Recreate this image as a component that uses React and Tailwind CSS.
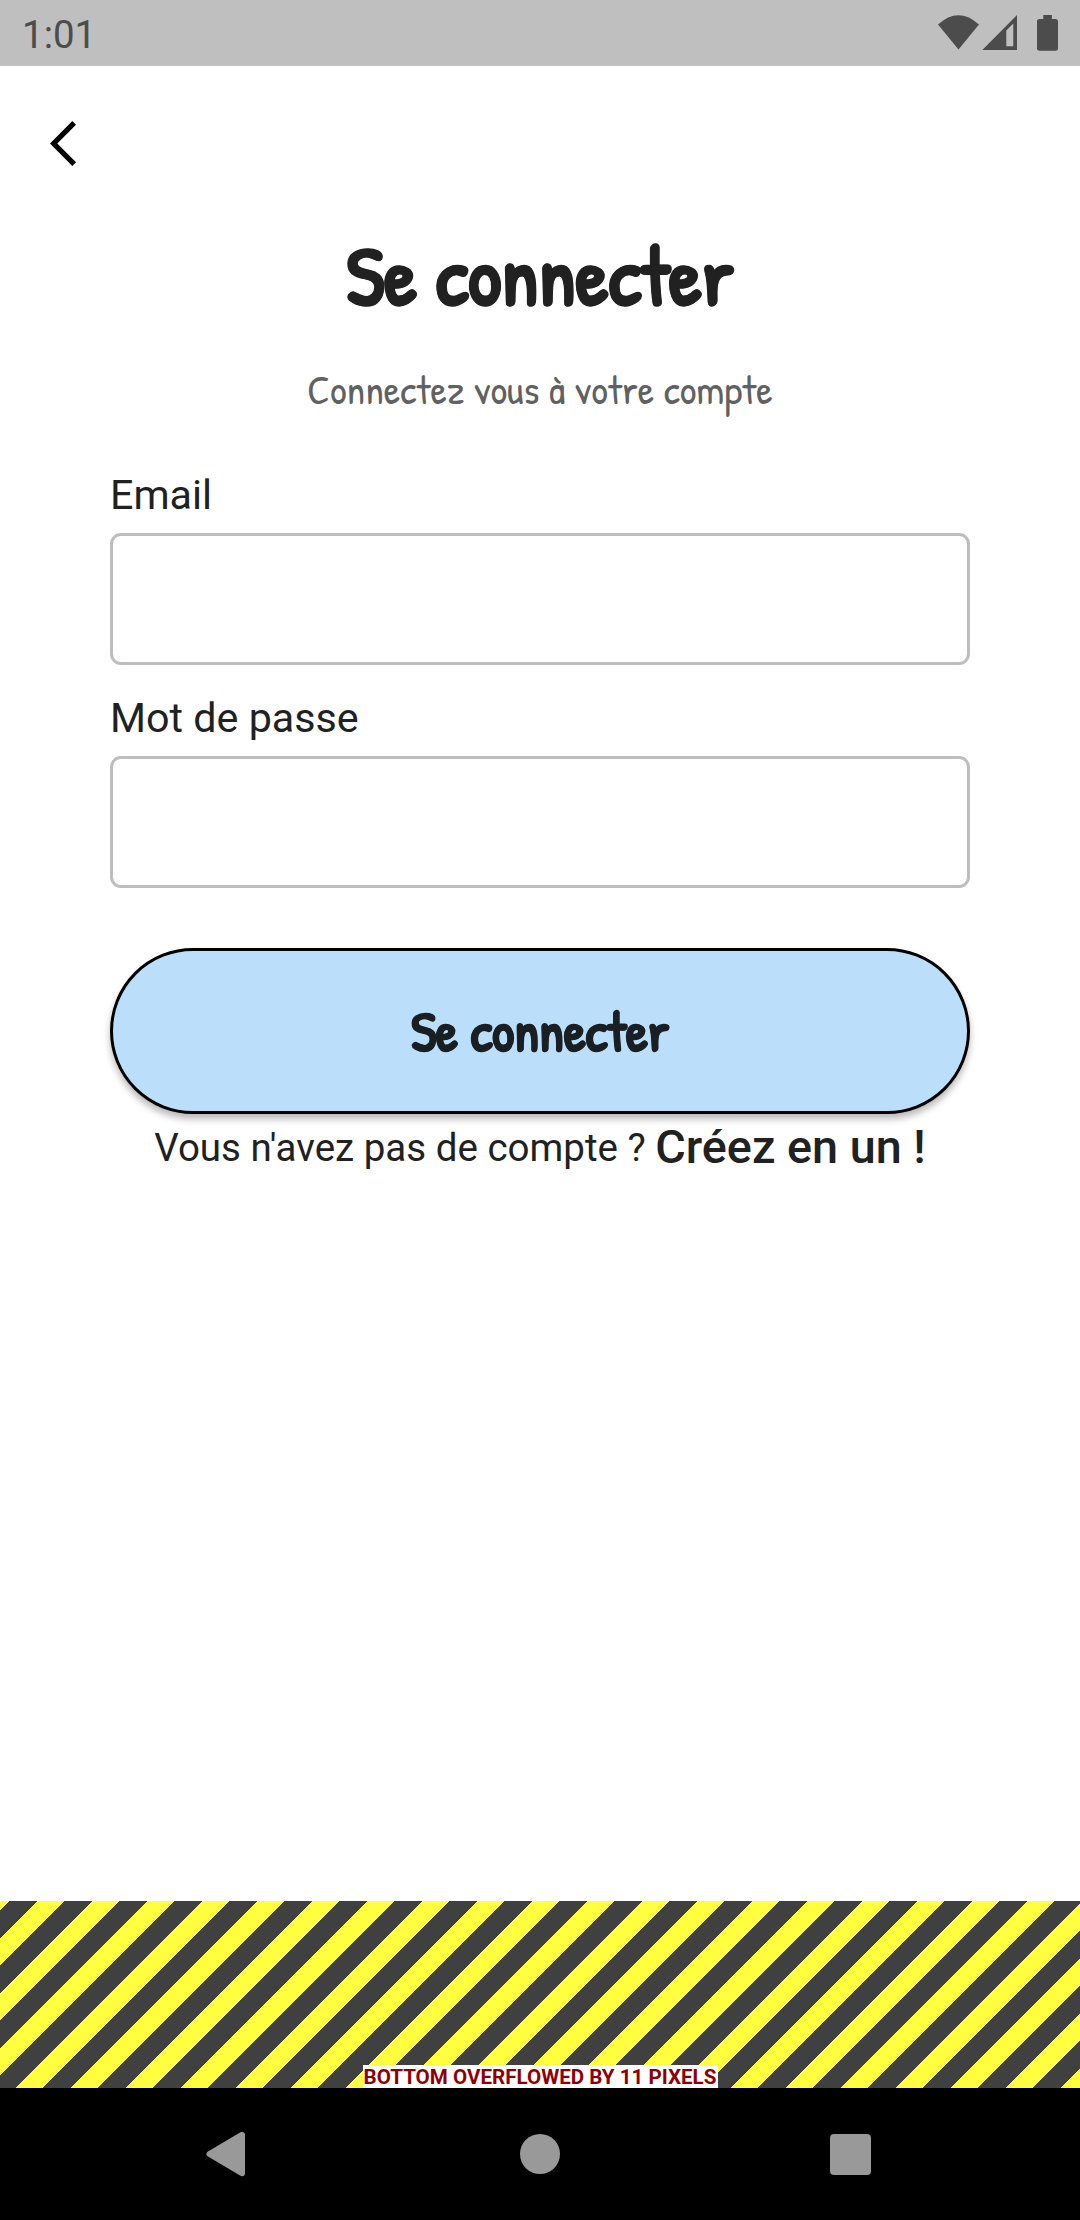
function StatusBar() {
  return (
    <header className="flex h-[66px] shrink-0 items-start justify-between bg-[#bfbfbf] pl-[22px] text-[#4c4c4c]">
      <span className="pt-[12px] text-[38.5px] leading-[46px]">1:01</span>
      <svg width="144" height="66" viewBox="936 0 144 66" fill="currentColor">
        <path d="M938 24.5Q958.500 6 979 24.500L958.500 49.500Z" />
        <path fillRule="evenodd" d="M1017 15V50H982.300ZM1006.300 30.500V46.300H1013.300V23.600Z" />
        <path d="M1043.300 15h8.600v4h3.600q2.500 0 2.500 2.500v26.700q0 2.500-2.500 2.500h-16q-2.500 0-2.500-2.500V21.500q0-2.500 2.500-2.500h3.800z" />
      </svg>
    </header>
  );
}

function Field({ label, type }) {
  return (
    <label className="mb-[21.750px] flex flex-col">
      <span className="mb-[10px] pt-[4px] text-[41.250px] leading-[55px]">{label}</span>
      <input type={type} className="h-[132px] w-full rounded-[11px] border-[3px] border-[#bdbdbd] bg-white px-7 text-[41px] outline-none" />
    </label>
  );
}

const hand = "whitespace-nowrap font-['Patrick_Hand','Inter',sans-serif]";

export default function App() {
  return (
    <div className="flex h-[2220px] w-[1080px] flex-col overflow-hidden bg-white font-['Roboto',sans-serif] text-[#212121]">
      <StatusBar />
      <main className="flex flex-1 flex-col">
        <button className="ml-[50px] mt-[55px] h-[45px] w-[26px]" aria-label="Retour">
          <svg width="26" height="45" viewBox="0 0 26 45">
            <path d="M0 22.500 22.300 0 26 3.800 7.300 22.500 26 41.200 22.300 45Z" fill="#000" />
          </svg>
        </button>
        <h1 className="mt-[53px] flex h-[112px] items-center justify-center">
          <span className={`${hand} text-[82.5px] font-bold leading-[112px] [-webkit-text-stroke:0.9px_#212121]`}>Se connecter</span>
        </h1>
        <p className="mt-[30px] flex h-[56px] items-center justify-center text-[#616161]">
          <span className={`${hand} text-[41.25px] font-normal leading-[56px]`}>Connectez vous à votre compte</span>
        </p>
        <form className="mx-[110px] mt-[47px] flex flex-col" onSubmit={(e) => e.preventDefault()}>
          <Field label="Email" type="email" />
          <Field label="Mot de passe" type="password" />
          <button className="mt-[38px] flex h-[166px] w-full items-center justify-center rounded-[83px] border-[3px] border-black bg-[#bbdefb] pt-px text-[#1a1f24] shadow-[0_5px_7px_rgba(0,0,0,0.28)]">
            <span className={`${hand} text-[55px] font-bold leading-[74px] [-webkit-text-stroke:0.8px_#1a1f24]`}>Se connecter</span>
          </button>
        </form>
        <p className="mt-[6px] flex items-center justify-center whitespace-nowrap">
          <span className="text-[38.500px] leading-[56px]">Vous n'avez pas de compte ?&nbsp;</span>
          <a className="-mt-px text-[46.75px] font-medium leading-[56px]">Créez en un !</a>
        </p>
      </main>
      <div className="flex h-[187px] shrink-0 items-end justify-center bg-[repeating-linear-gradient(135deg,#ffff40_0px,#ffff40_6.900px,#404040_6.900px,#404040_26.340px,#ffff40_26.340px,#ffff40_38.890px)]">
        <span className="h-[23.500px] w-[355px] whitespace-nowrap bg-white text-center text-[20.600px] font-bold leading-[24px] text-[#900000]">BOTTOM OVERFLOWED BY 11 PIXELS</span>
      </div>
      <nav className="flex h-[132px] shrink-0 items-center bg-black pl-[206px] text-[#999]">
        <svg width="39" height="46" viewBox="0 0 39 46" fill="currentColor" stroke="currentColor" strokeWidth="6" strokeLinejoin="round">
          <path d="M3.500 23 36 3.800V42.200Z" />
        </svg>
        <span className="ml-[275px] size-10 rounded-full bg-[#999]" />
        <span className="ml-[270px] size-[41px] rounded-[4px] bg-[#999]" />
      </nav>
    </div>
  );
}
